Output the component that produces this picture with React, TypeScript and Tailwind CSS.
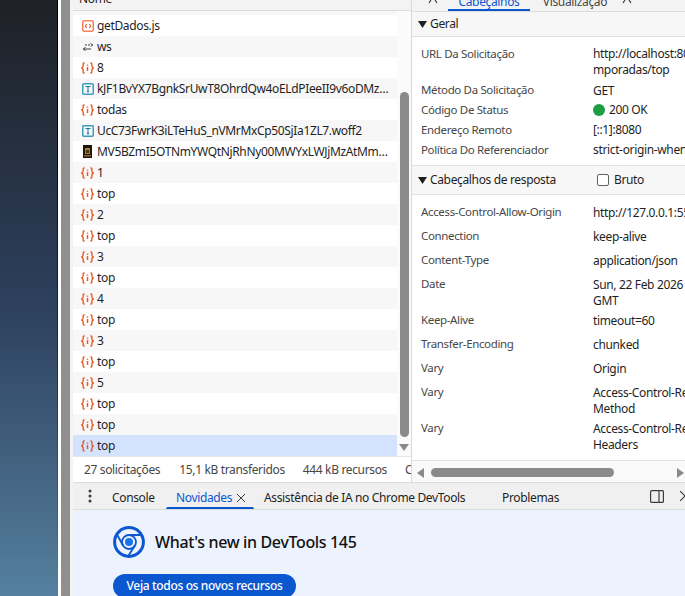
import React from 'react';

const font = { fontFamily: '"Noto Sans", sans-serif', letterSpacing: '-0.35px' };

type Kind = 'js' | 'ws' | 'fetch' | 'font' | 'img';

const rows: { name: string; kind: Kind }[] = [
  { name: 'getDados.js', kind: 'js' },
  { name: 'ws', kind: 'ws' },
  { name: '8', kind: 'fetch' },
  { name: 'kJF1BvYX7BgnkSrUwT8OhrdQw4oELdPIeeII9v6oDMzByHX', kind: 'font' },
  { name: 'todas', kind: 'fetch' },
  { name: 'UcC73FwrK3iLTeHuS_nVMrMxCp50SjIa1ZL7.woff2', kind: 'font' },
  { name: 'MV5BZmI5OTNmYWQtNjRhNy00MWYxLWJjMzAtMmUzND', kind: 'img' },
  { name: '1', kind: 'fetch' },
  { name: 'top', kind: 'fetch' },
  { name: '2', kind: 'fetch' },
  { name: 'top', kind: 'fetch' },
  { name: '3', kind: 'fetch' },
  { name: 'top', kind: 'fetch' },
  { name: '4', kind: 'fetch' },
  { name: 'top', kind: 'fetch' },
  { name: '3', kind: 'fetch' },
  { name: 'top', kind: 'fetch' },
  { name: '5', kind: 'fetch' },
  { name: 'top', kind: 'fetch' },
  { name: 'top', kind: 'fetch' },
  { name: 'top', kind: 'fetch' },
];

const RowIcon = ({ kind }: { kind: Kind }) => {
  if (kind === 'js') {
    return (
      <svg width="12" height="12" viewBox="0 0 12 12" fill="none">
        <rect x="0.75" y="0.75" width="10.5" height="10.5" rx="1.5" stroke="#f1835a" strokeWidth="1.5" />
        <path d="M4.8 4 3.2 6l1.6 2M7.2 4l1.6 2-1.6 2" stroke="#e8541c" strokeWidth="1.1" />
      </svg>
    );
  }
  if (kind === 'ws') {
    return (
      <svg width="12" height="12" viewBox="0 0 12 12" fill="none" stroke="#3c4043" strokeWidth="1">
        <path d="M3 4h8M8.5 2l2 2-2 2" strokeDasharray="2 1" />
        <path d="M1 8h8M3.5 6l-2 2 2 2" />
      </svg>
    );
  }
  if (kind === 'fetch') {
    return (
      <svg width="13" height="12" viewBox="0 0 13 12" fill="none" stroke="#ea5a24" strokeWidth="1.4">
        <path d="M3.6 1H3C2 1 2.2 2 2.2 3.2 2.2 4.8 2 5.5 0.8 6c1.2.5 1.4 1.2 1.4 2.8C2.2 10 2 11 3 11h.6" />
        <path d="M9.4 1H10c1 0 .8 1 .8 2.2 0 1.6.2 2.3 1.4 2.8-1.2.5-1.4 1.2-1.4 2.8 0 1.2.2 2.2-.8 2.2h-.6" />
        <path d="M6.5 5v4" strokeWidth="1.5" />
        <path d="M6.5 2.6v1.2" strokeWidth="1.5" />
      </svg>
    );
  }
  if (kind === 'font') {
    return (
      <svg width="12" height="12" viewBox="0 0 12 12" fill="none">
        <rect x="0.75" y="0.75" width="10.5" height="10.5" rx="1" stroke="#3f9db8" strokeWidth="1.5" />
        <path d="M3.5 3.5h5M6 3.5v5.2M4.8 8.7h2.4" stroke="#1c7f9c" strokeWidth="1.1" />
      </svg>
    );
  }
  return (
    <svg width="9" height="13" viewBox="0 0 9 13">
      <rect width="9" height="13" fill="#1d160c" />
      <rect x="2" y="3" width="5" height="6" fill="#a9812f" />
      <rect x="3" y="5" width="3" height="3" fill="#4a3513" />
      <rect x="1" y="10" width="7" height="1.5" fill="#8a6a2a" />
    </svg>
  );
};

const Arrow = ({ dir }: { dir: 'down' | 'left' | 'right' }) => {
  const d = dir === 'down' ? 'M0 0h10L5 7z' : dir === 'left' ? 'M7 0v10L0 5z' : 'M0 0v10l7-5z';
  const box = dir === 'down' ? '0 0 10 7' : '0 0 7 10';
  return (
    <svg width={dir === 'down' ? 10 : 7} height={dir === 'down' ? 7 : 10} viewBox={box} fill="#8a8a8a">
      <path d={d} />
    </svg>
  );
};

const HeaderRow = ({
  label,
  children,
  h = 'h-5',
  low = false,
}: {
  label: string;
  children: React.ReactNode;
  h?: string;
  low?: boolean;
}) => (
  <div className={`flex ${h} pl-[9px] text-[11.5px] leading-4 shrink-0`}>
    <div className="w-[172px] shrink-0 text-[#474747] pt-[1px] whitespace-nowrap">{label}</div>
    <div className={`text-[#1f1f1f] whitespace-nowrap text-[12px] ${low ? 'pt-[2px]' : 'pt-[1px]'}`}>{children}</div>
  </div>
);

const SectionCaret = () => (
  <svg width="9" height="7" viewBox="0 0 9 7" fill="#1f1f1f" className="mr-[3px]">
    <path d="M0 0h9L4.5 7z" />
  </svg>
);

// only the lower tips of these toolbar glyphs show above the fold
const ClippedTips = () => (
  <svg width="10" height="4" viewBox="0 0 10 4" stroke="#3c3c3c" strokeWidth="1.2">
    <path d="M3 0 1 3M7 0l2 3" />
  </svg>
);

export default function App() {
  return (
    <div className="flex w-[685px] h-[596px] overflow-hidden bg-white text-[12px]" style={font}>
      {/* wallpaper and window edge */}
      <div className="w-[58px] shrink-0 flex justify-end bg-gradient-to-b from-[#1e2126] via-[#2c3f5c] to-[#55809f]">
        <div className="w-px h-full bg-gradient-to-b from-black to-transparent" />
      </div>
      <div className="w-[3px] shrink-0 bg-white" />
      <div className="w-[9px] shrink-0 bg-[#8f8f8f]" />
      <div className="w-[3px] shrink-0 bg-[#f3f3f3]" />

      <div className="flex flex-col w-[612px] shrink-0">
        {/* network panel */}
        <div className="flex h-[482px] shrink-0">
          {/* request list */}
          <div className="flex flex-col w-[339px] shrink-0 border-r border-[#d9d9d9]">
            <div className="h-[11px] shrink-0 overflow-hidden flex items-end bg-[#f3f3f3] border-b border-[#dcdcdc] pl-[6px]">
              <span className="leading-4 text-[#1f1f1f] pb-[3px]">Nome</span>
            </div>
            <div className="flex flex-1 min-h-0">
              <div className="w-[324px] shrink-0 flex flex-col">
                <div className="h-[4px] shrink-0 bg-[#f7f7f7]" />
                {rows.map((r, i) => {
                  const selected = i === rows.length - 1;
                  return (
                    <div
                      key={i}
                      className={`flex items-center h-[21px] shrink-0 pl-[7px] ${
                        selected ? 'bg-[#d3e3fd]' : i % 2 === 1 ? 'bg-[#f7f7f7]' : 'bg-white'
                      }`}
                    >
                      <span className="w-[17px] shrink-0 flex justify-center -ml-[1px] mr-[1px]">
                        <RowIcon kind={r.kind} />
                      </span>
                      <span className="truncate text-[12px] text-[#1f1f1f] pr-[3px]">{r.name}</span>
                    </div>
                  );
                })}
              </div>
              {/* vertical scrollbar */}
              <div className="w-[14px] shrink-0 flex flex-col items-center bg-[#fbfbfb]">
                <div className="w-[9px] h-[345px] mt-[81px] rounded-full bg-[#8a8a8a]" />
                <div className="mt-[7px]">
                  <Arrow dir="down" />
                </div>
              </div>
            </div>
            {/* status bar */}
            <div className="h-[26px] shrink-0 flex items-center border-t border-[#e6e6e6] bg-white text-[#474747] whitespace-nowrap overflow-hidden pl-[11px]">
              <span>27 solicitações</span>
              <span className="w-px h-4 bg-[#dcdcdc] ml-[9px] mr-[10px]" />
              <span>15,1 kB transferidos</span>
              <span className="w-px h-4 bg-[#dcdcdc] mx-[9px]" />
              <span>444 kB recursos</span>
              <span className="w-px h-4 bg-[#dcdcdc] mx-[9px]" />
              <span>Concluir: 1,2 min</span>
            </div>
          </div>

          {/* detail pane */}
          <div className="flex flex-col flex-1 min-w-0 overflow-hidden">
            <div className="h-[12px] shrink-0 flex items-end bg-[#f3f3f3] border-b border-[#dcdcdc] overflow-hidden">
              <div className="w-[36px] shrink-0 h-[11px] pl-[16px]">
                <ClippedTips />
              </div>
              <div className="w-[82px] shrink-0 h-[11px] relative overflow-hidden text-center">
                <span className="absolute left-0 right-0 -top-[6px] text-[#0b57d0] leading-4">Cabeçalhos</span>
                <span className="absolute left-0 right-0 bottom-0 h-[2px] bg-[#0b57d0]" />
              </div>
              <div className="h-[11px] relative overflow-hidden w-[90px] shrink-0 text-center">
                <span className="absolute left-0 right-0 -top-[6px] text-[#474747] leading-4">Visualização</span>
              </div>
              <div className="h-[11px] pl-[2px] shrink-0">
                <ClippedTips />
              </div>
            </div>
            <div className="flex items-center h-[25px] shrink-0 bg-[#f7f7f7] border-b border-[#e0e0e0] pl-[6px] text-[#1f1f1f]">
              <SectionCaret />
              Geral
            </div>
            <div className="flex flex-col pt-[8px] shrink-0 border-b border-[#e0e0e0] h-[129px]">
              <HeaderRow label="URL Da Solicitação" h="h-[36px]">
                http://localhost:8080/api/te
                <div className="leading-4">mporadas/top</div>
              </HeaderRow>
              <HeaderRow label="Método Da Solicitação" low>GET</HeaderRow>
              <HeaderRow label="Código De Status">
                <span className="flex items-center gap-[4px]">
                  <span className="w-3 h-3 rounded-full bg-[#1e9e44]" />
                  200 OK
                </span>
              </HeaderRow>
              <HeaderRow label="Endereço Remoto">[::1]:8080</HeaderRow>
              <HeaderRow label="Política Do Referenciador">strict-origin-when-cross-origin</HeaderRow>
            </div>
            <div className="flex items-center h-[29px] shrink-0 bg-[#f7f7f7] border-b border-[#e0e0e0] pl-[6px] text-[#1f1f1f]">
              <SectionCaret />
              <span className="w-[167px] shrink-0">Cabeçalhos de resposta</span>
              <span className="w-3 h-3 rounded-[2px] border border-[#5f6368] bg-white mr-[5px]" />
              Bruto
            </div>
            <div className="flex flex-col flex-1 pt-[8px] min-h-0">
              <HeaderRow label="Access-Control-Allow-Origin" h="h-6" low>http://127.0.0.1:5500</HeaderRow>
              <HeaderRow label="Connection" h="h-6" low>keep-alive</HeaderRow>
              <HeaderRow label="Content-Type" h="h-6" low>application/json</HeaderRow>
              <HeaderRow label="Date" h="h-[36px]" low>
                Sun, 22 Feb 2026 18:00:00
                <div className="leading-4">GMT</div>
              </HeaderRow>
              <HeaderRow label="Keep-Alive" h="h-6" low>timeout=60</HeaderRow>
              <HeaderRow label="Transfer-Encoding" h="h-6" low>chunked</HeaderRow>
              <HeaderRow label="Vary" h="h-6" low>Origin</HeaderRow>
              <HeaderRow label="Vary" h="h-[36px]" low>
                Access-Control-Request-
                <div className="leading-4">Method</div>
              </HeaderRow>
              <HeaderRow label="Vary" h="h-[36px]" low>
                Access-Control-Request-
                <div className="leading-4">Headers</div>
              </HeaderRow>
            </div>
            {/* horizontal scrollbar */}
            <div className="h-[22px] shrink-0 flex items-center border-t border-[#e0e0e0] bg-[#f9f9f9] pl-[5px] pt-[2px]">
              <Arrow dir="left" />
              <div className="w-[183px] h-[9px] rounded-full bg-[#8a8a8a] ml-[7px]" />
              <div className="ml-[63px]">
                <Arrow dir="right" />
              </div>
            </div>
          </div>
        </div>

        {/* drawer tabs */}
        <div className="flex items-center h-[28px] pt-[3px] shrink-0 bg-[#f0f0f0] border-y border-[#dcdcdc] text-[#1f1f1f] whitespace-nowrap">
          <span className="w-[39px] shrink-0 flex pl-[15px] -mt-[3px]">
            <svg width="4" height="14" viewBox="0 0 4 14" fill="#3c3c3c">
              <circle cx="2" cy="2" r="1.5" />
              <circle cx="2" cy="7" r="1.5" />
              <circle cx="2" cy="12" r="1.5" />
            </svg>
          </span>
          <span className="w-[54px] shrink-0">Console</span>
          <div className="relative h-full flex items-center w-[88px] shrink-0 pl-[10px]">
            <span className="text-[#0b57d0]">Novidades</span>
            <svg width="10" height="10" viewBox="0 0 10 10" stroke="#3c3c3c" strokeWidth="1" className="ml-[4px]">
              <path d="M1 1l8 8M9 1 1 9" />
            </svg>
            <span className="absolute left-0 right-0 bottom-0 h-[2px] rounded-t bg-[#0b57d0]" />
          </div>
          <span className="ml-[10px] w-[238px] shrink-0">Assistência de IA no Chrome DevTools</span>
          <span className="w-[148px] shrink-0">Problemas</span>
          <svg width="14" height="13" viewBox="0 0 14 13" fill="none" stroke="#3c3c3c" strokeWidth="1.2" className="-mt-[3px] shrink-0">
            <rect x="0.6" y="0.6" width="12.8" height="11.8" rx="1" />
            <path d="M9 1v11" />
          </svg>
          <svg width="10" height="10" viewBox="0 0 10 10" stroke="#3c3c3c" strokeWidth="1.2" className="ml-[16px] -mt-[3px] shrink-0">
            <path d="M0 0l10 10M10 0 0 10" />
          </svg>
        </div>

        {/* whats new */}
        <div className="flex-1 min-h-0 bg-[#ecf2fe] pl-[40px] pt-[16px]">
          <div className="flex items-center">
            <svg width="32" height="32" viewBox="0 0 32 32" fill="none" stroke="#0b57d0">
              <circle cx="16" cy="16" r="14.4" strokeWidth="3" fill="#eef3fe" />
              <circle cx="16" cy="16" r="7" strokeWidth="1.8" />
              <circle cx="16" cy="16" r="4" stroke="none" fill="#1a73e8" />
              <path d="M16 9h11.5M10 19.5 4.6 9.5M22 19.5 15.5 29.5" strokeWidth="1.8" />
            </svg>
            <span className="ml-[10px] text-[16px] font-medium text-[#111]">What's new in DevTools 145</span>
          </div>
          <div className="mt-[16px] w-[183px] h-[24px] rounded-full bg-[#0b57d0] text-white font-medium flex items-center justify-center whitespace-nowrap">
            Veja todos os novos recursos
          </div>
        </div>
      </div>
    </div>
  );
}
